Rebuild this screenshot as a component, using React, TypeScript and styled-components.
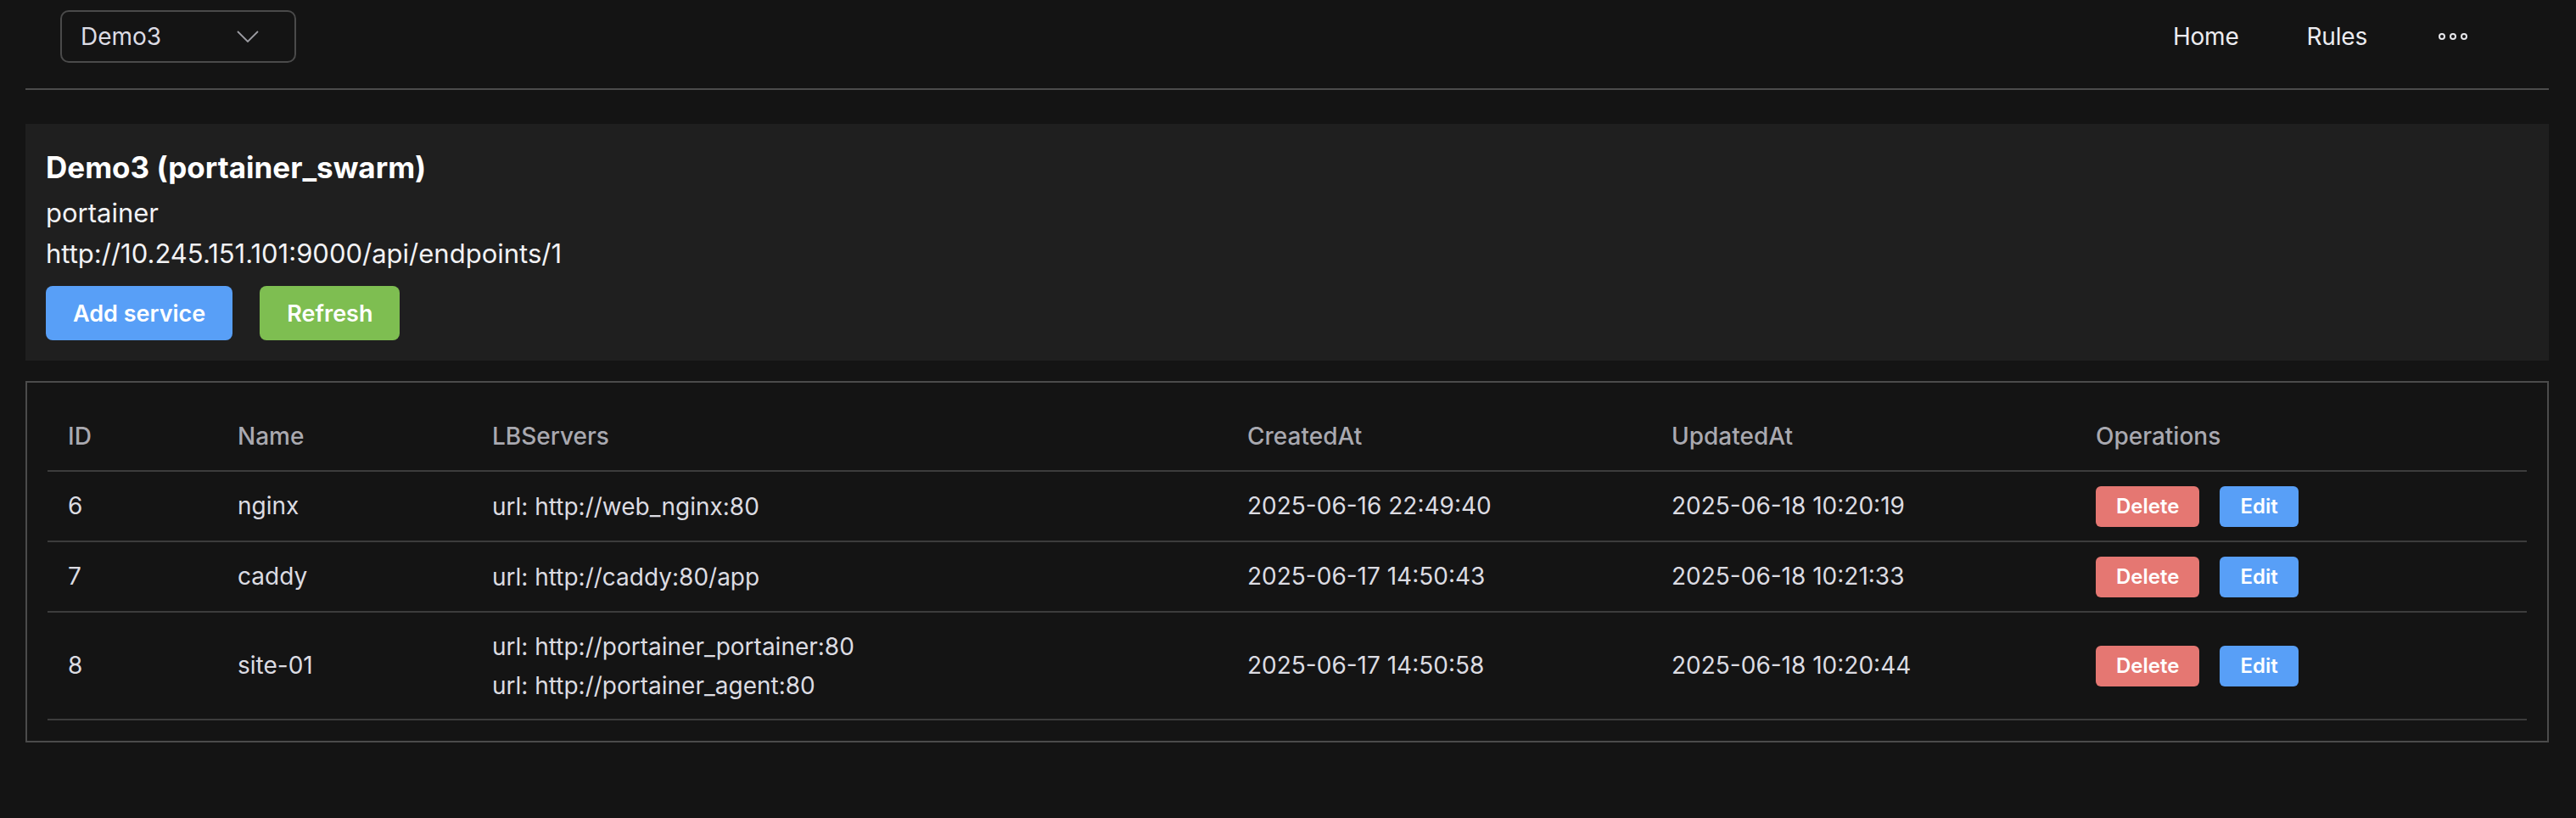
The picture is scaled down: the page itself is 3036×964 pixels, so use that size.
import React from "react";
import styled, { createGlobalStyle } from "styled-components";

const GlobalStyle = createGlobalStyle`
  html, body {
    margin: 0;
    padding: 0;
    background: #141414;
  }
  body {
    font-family: Inter, "Noto Sans", "Liberation Sans", sans-serif;
    color: #dcdce2;
  }
  * { box-sizing: border-box; }
`;

const Page = styled.div`
  padding: 0 32px 40px 30px;
  min-height: 964px;
  background: #141414;
`;

const Header = styled.header`
  display: flex;
  align-items: center;
  justify-content: space-between;
  padding: 12px 0 30px 41px;
  border-bottom: 2px solid #4b4b4b;
`;

const Select = styled.div`
  width: 278px;
  height: 62px;
  border: 2px solid #4a4a4a;
  border-radius: 10px;
  display: flex;
  align-items: center;
  justify-content: space-between;
  padding: 0 42px 0 22px;
  font-size: 28px;
  color: #dcdce4;
`;

const Nav = styled.nav`
  display: flex;
  align-items: center;
  gap: 80px;
  padding-right: 96px;
`;

const NavItem = styled.span<{ $offset?: number }>`
  font-size: 28px;
  color: #ececf0;
  line-height: 40px;
  letter-spacing: -0.2px;
  margin-left: ${(p) => p.$offset ?? 0}px;
  display: inline-flex;
  align-items: center;
`;

const Card = styled.section`
  margin-top: 40px;
  background: #1f1f1f;
  padding: 27px 24px 24px;
`;

const Title = styled.h2`
  margin: 0 0 6px;
  font-size: 35px;
  line-height: 48px;
  font-weight: 700;
  color: #ffffff;
`;

const InfoLine = styled.div`
  font-size: 31px;
  line-height: 48px;
  color: #f2f2f4;
`;

const ButtonRow = styled.div`
  display: flex;
  gap: 32px;
  margin-top: 14px;
`;

const Button = styled.button<{ $color: string; $small?: boolean }>`
  border: none;
  cursor: pointer;
  font-family: inherit;
  color: #ffffff;
  background: ${(p) => p.$color};
  height: ${(p) => (p.$small ? 48 : 64)}px;
  padding: 0 ${(p) => (p.$small ? 24 : 32)}px;
  border-radius: ${(p) => (p.$small ? 6 : 8)}px;
  font-size: ${(p) => (p.$small ? 24 : 27)}px;
  font-weight: 600;
`;

const TableBox = styled.div`
  margin-top: 24px;
  border: 2px solid #4b4b4b;
  padding: 24px;
`;

const Table = styled.table`
  width: 100%;
  border-collapse: collapse;
  table-layout: fixed;
`;

const Th = styled.th`
  text-align: left;
  padding: 17px 24px;
  font-size: 28px;
  line-height: 45px;
  font-weight: 500;
  color: #a9a9b0;
  border-bottom: 2px solid #3c3c3c;
`;

const Td = styled.td`
  text-align: left;
  vertical-align: middle;
  padding: 16.5px 24px;
  font-size: 28px;
  line-height: 41px;
  color: #dcdce2;
  border-bottom: 2px solid #3c3c3c;
`;

const LbLine = styled.div`
  line-height: 46px;
`;

const Ops = styled.div`
  display: flex;
  gap: 24px;
`;

const Chevron = () => (
  <svg width="26" height="14" viewBox="0 0 26 14" fill="none">
    <polyline points="1,1 13,13 25,1" stroke="#9c9ca2" strokeWidth="1.8" />
  </svg>
);

const Dots = () => (
  <svg width="34" height="10" viewBox="0 0 34 10" fill="none">
    <circle cx="4" cy="5" r="3" stroke="#e6e6ea" strokeWidth="2" />
    <circle cx="17" cy="5" r="3" stroke="#e6e6ea" strokeWidth="2" />
    <circle cx="30" cy="5" r="3" stroke="#e6e6ea" strokeWidth="2" />
  </svg>
);

type Row = {
  id: number;
  name: string;
  lb: string[];
  created: string;
  updated: string;
};

const rows: Row[] = [
  { id: 6, name: "nginx", lb: ["url: http://web_nginx:80"], created: "2025-06-16 22:49:40", updated: "2025-06-18 10:20:19" },
  { id: 7, name: "caddy", lb: ["url: http://caddy:80/app"], created: "2025-06-17 14:50:43", updated: "2025-06-18 10:21:33" },
  {
    id: 8,
    name: "site-01",
    lb: ["url: http://portainer_portainer:80", "url: http://portainer_agent:80"],
    created: "2025-06-17 14:50:58",
    updated: "2025-06-18 10:20:44",
  },
];

export default function App() {
  return (
    <>
      <GlobalStyle />
      <Page>
        <Header>
          <Select>
            <span>Demo3</span>
            <Chevron />
          </Select>
          <Nav>
            <NavItem>Home</NavItem>
            <NavItem>Rules</NavItem>
            <NavItem $offset={4}>
              <Dots />
            </NavItem>
          </Nav>
        </Header>

        <Card>
          <Title>Demo3 (portainer_swarm)</Title>
          <InfoLine>portainer</InfoLine>
          <InfoLine>http://10.245.151.101:9000/api/endpoints/1</InfoLine>
          <ButtonRow>
            <Button $color="#589ff7">Add service</Button>
            <Button $color="#7ebe51">Refresh</Button>
          </ButtonRow>
        </Card>

        <TableBox>
          <Table>
            <colgroup>
              <col style={{ width: 200 }} />
              <col style={{ width: 300 }} />
              <col style={{ width: 890 }} />
              <col style={{ width: 500 }} />
              <col style={{ width: 500 }} />
              <col />
            </colgroup>
            <thead>
              <tr>
                <Th>ID</Th>
                <Th>Name</Th>
                <Th>LBServers</Th>
                <Th>CreatedAt</Th>
                <Th>UpdatedAt</Th>
                <Th>Operations</Th>
              </tr>
            </thead>
            <tbody>
              {rows.map((r) => (
                <tr key={r.id}>
                  <Td>{r.id}</Td>
                  <Td>{r.name}</Td>
                  <Td>
                    {r.lb.map((u) => (
                      <LbLine key={u}>{u}</LbLine>
                    ))}
                  </Td>
                  <Td>{r.created}</Td>
                  <Td>{r.updated}</Td>
                  <Td>
                    <Ops>
                      <Button $small $color="#e57772">Delete</Button>
                      <Button $small $color="#589ff7">Edit</Button>
                    </Ops>
                  </Td>
                </tr>
              ))}
            </tbody>
          </Table>
        </TableBox>
      </Page>
    </>
  );
}
